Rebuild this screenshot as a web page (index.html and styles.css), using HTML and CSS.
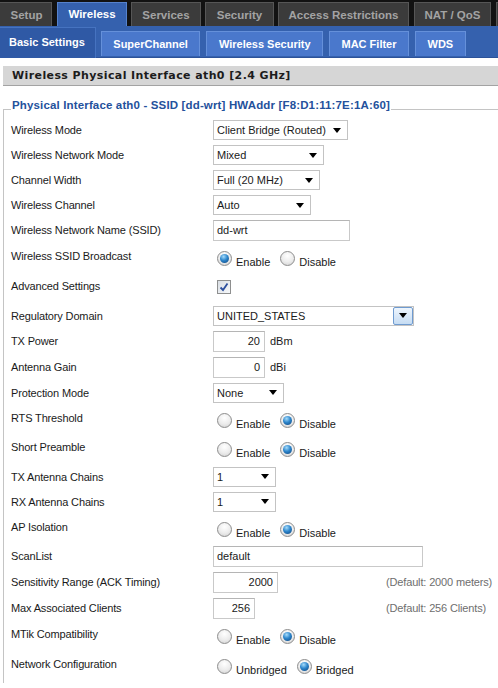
FILE: index.html
```html
<!DOCTYPE html>
<html lang="en">
<head>
  <meta charset="UTF-8" />
  <title>Basic Settings</title>
  <link rel="stylesheet" href="styles.css">
</head>
<body>
  <div class="topnav">
    <a class="tab t-setup">Setup</a>
    <a class="tab t-wireless active">Wireless</a>
    <a class="tab t-services">Services</a>
    <a class="tab t-security">Security</a>
    <a class="tab t-access">Access Restrictions</a>
    <a class="tab t-nat">NAT / QoS</a>
    <a class="tab t-more"></a>
  </div>

  <div class="subnav">
    <a class="subtab active">Basic Settings</a>
    <a class="subtab">SuperChannel</a>
    <a class="subtab">Wireless Security</a>
    <a class="subtab">MAC Filter</a>
    <a class="subtab">WDS</a>
  </div>

  <div class="content">
    <h2 class="section-title">Wireless Physical Interface ath0 [2.4 GHz]</h2>

    <fieldset class="iface">
      <legend>Physical Interface ath0 - SSID [dd-wrt] HWAddr [F8:D1:11:7E:1A:60]</legend>

      <div class="setting">
        <div class="label">Wireless Mode</div>
        <div class="select w-mode"><span>Client Bridge (Routed)</span><i class="caret"></i></div>
      </div>
      <div class="setting">
        <div class="label">Wireless Network Mode</div>
        <div class="select w-netmode"><span>Mixed</span><i class="caret"></i></div>
      </div>
      <div class="setting">
        <div class="label">Channel Width</div>
        <div class="select w-chwidth"><span>Full (20 MHz)</span><i class="caret"></i></div>
      </div>
      <div class="setting">
        <div class="label">Wireless Channel</div>
        <div class="select w-channel"><span>Auto</span><i class="caret"></i></div>
      </div>
      <div class="setting">
        <div class="label">Wireless Network Name (SSID)</div>
        <div class="text w-ssid">dd-wrt</div>
      </div>
      <div class="setting">
        <div class="label">Wireless SSID Broadcast</div>
        <div class="radios">
          <span class="radio on"></span><span class="opt">Enable</span>
          <span class="radio"></span><span class="opt">Disable</span>
        </div>
      </div>
      <div class="setting">
        <div class="label">Advanced Settings</div>
        <div class="checkwrap">
          <span class="checkbox">
            <svg width="12" height="12" viewBox="0 0 12 12"><path d="M2.5 6.5 L5 9 L9.5 2.5" fill="none" stroke="#2c4f9e" stroke-width="1.8"/></svg>
          </span>
        </div>
      </div>
      <div class="setting">
        <div class="label">Regulatory Domain</div>
        <div class="select w-domain"><span>UNITED_STATES</span><b class="dropbtn"><i class="caret"></i></b></div>
      </div>
      <div class="setting">
        <div class="label">TX Power</div>
        <div class="text num w-power">20</div><span class="unit">dBm</span>
      </div>
      <div class="setting">
        <div class="label">Antenna Gain</div>
        <div class="text num w-power">0</div><span class="unit">dBi</span>
      </div>
      <div class="setting">
        <div class="label">Protection Mode</div>
        <div class="select w-protect"><span>None</span><i class="caret"></i></div>
      </div>
      <div class="setting">
        <div class="label">RTS Threshold</div>
        <div class="radios">
          <span class="radio"></span><span class="opt">Enable</span>
          <span class="radio on"></span><span class="opt">Disable</span>
        </div>
      </div>
      <div class="setting">
        <div class="label">Short Preamble</div>
        <div class="radios">
          <span class="radio"></span><span class="opt">Enable</span>
          <span class="radio on"></span><span class="opt">Disable</span>
        </div>
      </div>
      <div class="setting">
        <div class="label">TX Antenna Chains</div>
        <div class="select w-chain"><span>1</span><i class="caret"></i></div>
      </div>
      <div class="setting">
        <div class="label">RX Antenna Chains</div>
        <div class="select w-chain"><span>1</span><i class="caret"></i></div>
      </div>
      <div class="setting">
        <div class="label">AP Isolation</div>
        <div class="radios">
          <span class="radio"></span><span class="opt">Enable</span>
          <span class="radio on"></span><span class="opt">Disable</span>
        </div>
      </div>
      <div class="setting">
        <div class="label">ScanList</div>
        <div class="text w-scan">default</div>
      </div>
      <div class="setting">
        <div class="label">Sensitivity Range (ACK Timing)</div>
        <div class="field"><div class="text num w-ack">2000</div></div>
        <span class="hint">(Default: 2000 meters)</span>
      </div>
      <div class="setting">
        <div class="label">Max Associated Clients</div>
        <div class="field"><div class="text num w-clients">256</div></div>
        <span class="hint">(Default: 256 Clients)</span>
      </div>
      <div class="setting">
        <div class="label">MTik Compatibility</div>
        <div class="radios">
          <span class="radio"></span><span class="opt">Enable</span>
          <span class="radio on"></span><span class="opt">Disable</span>
        </div>
      </div>
      <div class="setting">
        <div class="label">Network Configuration</div>
        <div class="radios">
          <span class="radio"></span><span class="opt">Unbridged</span>
          <span class="radio on"></span><span class="opt">Bridged</span>
        </div>
      </div>
    </fieldset>
  </div>
</body>
</html>
```

FILE: styles.css
```css
* {
  margin: 0;
  padding: 0;
  box-sizing: border-box;
}

body {
  background: #fff;
  font-family: 'Liberation Sans', Arial, sans-serif;
  font-size: 11px;
  color: #1a1a1a;
  overflow: hidden;
}

/* main tabs */
.topnav {
  display: flex;
  align-items: flex-end;
  gap: 4px;
  height: 26px;
  background: #121212;
  white-space: nowrap;
}

.tab {
  flex-shrink: 0;
  height: 24px;
  line-height: 24px;
  text-align: center;
  background: #3b3b3b;
  border: 1px solid #565656;
  border-bottom: none;
  color: #a3a3a3;
  font-weight: bold;
  font-size: 11.5px;
}

.tab.active {
  background: #3561ae;
  border-color: #5682cc;
  color: #fff;
  line-height: 22px;
}

.t-setup { width: 52px; padding-left: 2px; border-left: none; }
.t-wireless { width: 70px; margin-left: 1px; }
.t-services { width: 70px; }
.t-security { width: 69px; }
.t-access { width: 131px; }
.t-nat { width: 77px; margin-left: 1px; }
.t-more { width: 40px; margin-left: 1px; }

/* sub tabs */
.subnav {
  display: flex;
  align-items: flex-end;
  gap: 6px;
  height: 32px;
  padding-bottom: 1px;
  background: #3561ae;
  border-bottom: 1px solid #2c5299;
  white-space: nowrap;
}

.subtab {
  height: 25px;
  padding: 0 11.5px;
  line-height: 24px;
  background: #4a78cc;
  border: 1px solid #6590da;
  border-bottom: none;
  color: #fff;
  font-weight: bold;
  font-size: 11px;
}

.subtab.active {
  height: 31px;
  margin-right: -1px;
  margin-bottom: -2px;
  padding: 0 10px 0 9px;
  line-height: 28px;
  background: #2f59a5;
  border-color: #4673c0;
  border-left: none;
}

/* content */
.content {
  padding-top: 8px;
}

.section-title {
  height: 20px;
  margin-left: 3px;
  padding-left: 9px;
  line-height: 19px;
  background: #d6d6d6;
  border-bottom: 1px solid #a3a3a3;
  font-family: 'DejaVu Sans', Verdana, sans-serif;
  font-size: 11px;
  font-weight: bold;
  color: #1c1c1c;
  letter-spacing: 0.4px;
}

.iface {
  margin: 13px 0 0 3px;
  padding: 0 0 0 7px;
  border: 1px solid #c4c4c4;
  border-right: none;
  border-bottom: none;
}

.iface legend {
  padding: 0 1px 8px;
  line-height: 13px;
  color: #24519c;
  font-weight: bold;
  font-size: 11.5px;
  letter-spacing: 0.15px;
}

.setting {
  display: flex;
  align-items: flex-start;
  padding-bottom: 5px;
}

.label {
  width: 202px;
  flex-shrink: 0;
  padding-top: 3px;
  line-height: 14px;
  letter-spacing: -0.15px;
}

/* form widgets */
.select {
  display: flex;
  align-items: center;
  justify-content: space-between;
  height: 20px;
  padding-left: 3px;
  background: #fff;
  border: 1px solid #c3c3c3;
}

.caret {
  width: 0;
  height: 0;
  margin-right: 6px;
  border-left: 4.5px solid transparent;
  border-right: 4.5px solid transparent;
  border-top: 5px solid #000;
}

.dropbtn {
  display: flex;
  align-items: center;
  justify-content: center;
  width: 20px;
  height: 18px;
  background: linear-gradient(#eef5fd, #c6dcf3);
  border: 1px solid #6f9bd0;
  border-radius: 2px;
}

.dropbtn .caret {
  margin-right: 0;
}

.text {
  height: 21px;
  padding: 0 3px;
  line-height: 19px;
  background: #fff;
  border: 1px solid #c9c9c9;
  border-top-color: #b5b5b5;
}

.text.num {
  text-align: right;
  padding-right: 4px;
}

.unit {
  padding-left: 5px;
  line-height: 21px;
}

.field {
  width: 173px;
  flex-shrink: 0;
}

.hint {
  line-height: 21px;
  color: #6e6e6e;
  letter-spacing: -0.15px;
}

.w-mode { width: 135px; }
.w-netmode { width: 111px; }
.w-chwidth { width: 107px; }
.w-channel { width: 98px; }
.w-ssid { width: 137px; }
.w-domain { width: 201px; }
.w-power { width: 52px; }
.w-protect { width: 71px; }
.w-chain { width: 63px; }
.w-scan { width: 210px; }
.w-ack { width: 65px; }
.w-clients { width: 42px; }

.radios {
  display: flex;
  align-items: flex-start;
  height: 24.5px;
  padding: 5px 0 0 4px;
}

.radio {
  display: flex;
  align-items: center;
  justify-content: center;
  width: 15px;
  height: 15px;
  border-radius: 50%;
  border: 1px solid #8d8d8d;
  background: radial-gradient(circle at 50% 30%, #ffffff 0%, #ececec 55%, #cdcdcd 100%);
}

.radio.on::after {
  content: '';
  width: 9px;
  height: 9px;
  border-radius: 50%;
  background: radial-gradient(circle at 40% 30%, #a6dcfb 0%, #2d86cc 45%, #0b3f78 100%);
}

.opt {
  padding: 4px 10px 0 4px;
  line-height: 14px;
}

.checkwrap {
  height: 25px;
  padding: 4px 0 0 4px;
}

.checkbox {
  display: flex;
  align-items: center;
  justify-content: center;
  width: 14px;
  height: 14px;
  border: 1px solid #8e8f8f;
  background: linear-gradient(135deg, #d9dee4, #f6f8fa);
}
```
